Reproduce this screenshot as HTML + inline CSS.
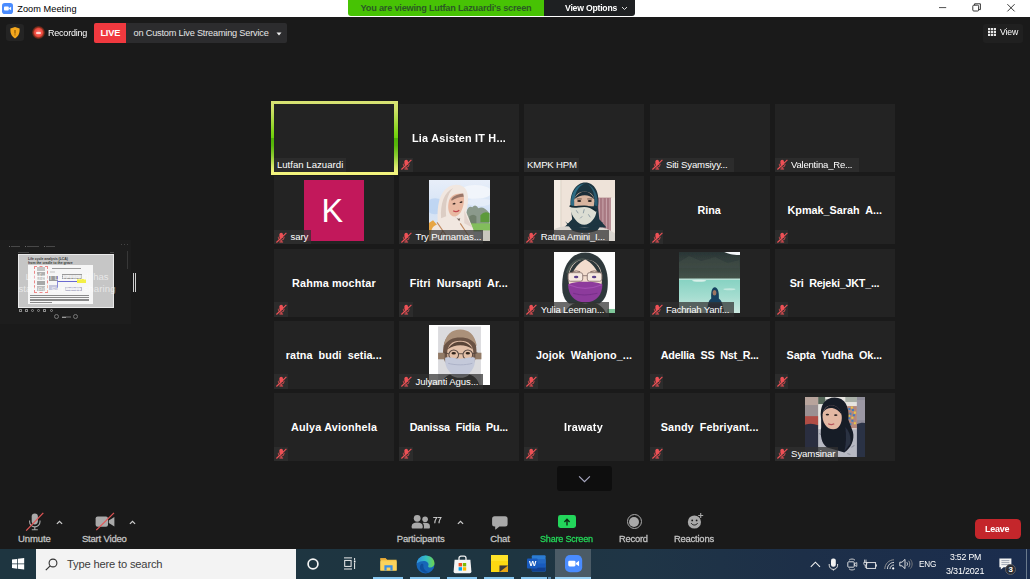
<!DOCTYPE html>
<html lang="en"><head><meta charset="utf-8"><title>Zoom Meeting</title>
<style>
html,body{margin:0;padding:0}
body{width:1030px;height:579px;overflow:hidden;position:relative;background:#1a1a1a;font-family:"Liberation Sans",sans-serif;color:#fff}
div,svg,span{position:absolute}
.t{white-space:pre;line-height:14px;height:14px}
.tile{width:120.2px;height:67.8px;background:#232323}
.av{left:29.85px;top:3.65px;width:60.5px;height:60.5px}
.lab{height:14.4px;background:rgba(48,48,48,.72)}
.mic{position:static;display:block}
svg{overflow:visible}
</style></head><body>
<div id="titlebar" style="left:0;top:0;width:1030px;height:17px;background:#fff"></div>
<svg style="left:2px;top:2.6px" width="11" height="11" viewBox="0 0 11 11"><rect width="11" height="11" rx="2.8" fill="#4a8cff"/><rect x="2" y="3.6" width="4.8" height="3.8" rx="0.9" fill="#fff"/><path d="M7.1 5l2-1.3v3.6l-2-1.3z" fill="#fff"/></svg>
<span class="t" style="left:17.3px;top:1.6px;font-size:9.2px;color:#000;letter-spacing:0.047px;">Zoom Meeting</span><svg style="left:930px;top:0" width="100" height="17" viewBox="0 0 100 17"><path d="M9 7.6h7.2" stroke="#222" stroke-width="0.8"/><rect x="42.8" y="5.2" width="5.8" height="5.8" rx="1" fill="none" stroke="#222" stroke-width="0.9"/><path d="M44.6 5.2v-1.4h5.8v5.8h-1.6" fill="none" stroke="#222" stroke-width="0.9"/><path d="M77.4 4.2l7.2 7.2M84.6 4.2l-7.2 7.2" stroke="#222" stroke-width="0.9"/></svg>
<div style="left:348.3px;top:0;width:196px;height:16.2px;background:#47c304;border-radius:0 0 0 3px"></div>
<div style="left:544px;top:0;width:91px;height:15.8px;background:#1e2022;border-radius:0 0 3px 0"></div>
<span class="t" style="left:360.6px;top:1px;font-size:9.2px;font-weight:700;color:#2b5a24;letter-spacing:-0.220px;">You are viewing Lutfan Lazuardi's screen</span><span class="t" style="left:565.4px;top:1px;font-size:9.2px;font-weight:700;color:#fff;letter-spacing:-0.220px;transform-origin:0 50%;transform:scaleX(0.9406);">View Options</span><svg style="left:621px;top:6px" width="7" height="5" viewBox="0 0 7 5"><path d="M1 1l2.5 2.5L6 1" fill="none" stroke="#ddd" stroke-width="1"/></svg>
<div style="left:6px;top:23.5px;width:17.5px;height:17.5px;background:#242424;border-radius:3px"></div>
<svg style="left:9.5px;top:26.6px" width="10" height="11.6" viewBox="0 0 10 11.6"><path d="M5 0l4.6 1.6c.3 4.6-.9 7.6-4.6 10C1.300 9.200.1 6.200.4 1.600z" fill="#f4a71d"/><rect x="4.500" y="3" width="1" height="3.600" fill="#7a4b00"/><rect x="4.500" y="7.400" width="1" height="1" fill="#7a4b00"/></svg>
<div style="left:32.4px;top:26.2px;width:13px;height:13px;border-radius:50%;background:radial-gradient(circle,#ff9088 0,#f5554d 30%,#e9493c 44%,rgba(210,62,28,.55) 58%,rgba(150,45,10,.22) 76%,rgba(120,40,10,0) 100%)"></div>
<div style="left:36.4px;top:31.8px;width:5px;height:1.8px;background:#ffd9d2;border-radius:1px"></div>
<span class="t" style="left:48.3px;top:25.6px;font-size:9.2px;color:#fff;letter-spacing:-0.220px;transform-origin:0 50%;transform:scaleX(0.9797);">Recording</span><div style="left:94px;top:23.2px;width:193px;height:20px;background:#2c2c2e;border-radius:2px"></div>
<div style="left:94px;top:23.2px;width:32px;height:20px;background:#f0393f;border-radius:2px 0 0 2px"></div>
<span class="t" style="left:100.4px;top:26px;font-size:9.2px;font-weight:700;color:#fff;letter-spacing:-0.155px;">LIVE</span><span class="t" style="left:133.6px;top:26px;font-size:9.2px;color:#e6e6e6;letter-spacing:-0.202px;">on Custom Live Streaming Service</span><svg style="left:276px;top:31.5px" width="6" height="4" viewBox="0 0 6 4"><path d="M0.5 0.5h5L3 3.5z" fill="#eee"/></svg>
<div style="left:983.4px;top:24px;width:40px;height:19px;background:#202020;border-radius:3px"></div>
<svg style="left:987.6px;top:28.4px" width="8" height="8" viewBox="0 0 8 8"><rect x="0" y="0" width="2.2" height="2.2" fill="#e8e8e8"/><rect x="0" y="2.9" width="2.2" height="2.2" fill="#e8e8e8"/><rect x="0" y="5.8" width="2.2" height="2.2" fill="#e8e8e8"/><rect x="2.9" y="0" width="2.2" height="2.2" fill="#e8e8e8"/><rect x="2.9" y="2.9" width="2.2" height="2.2" fill="#e8e8e8"/><rect x="2.9" y="5.8" width="2.2" height="2.2" fill="#e8e8e8"/><rect x="5.8" y="0" width="2.2" height="2.2" fill="#e8e8e8"/><rect x="5.8" y="2.9" width="2.2" height="2.2" fill="#e8e8e8"/><rect x="5.8" y="5.8" width="2.2" height="2.2" fill="#e8e8e8"/></svg>
<span class="t" style="left:1000px;top:25.4px;font-size:9.2px;color:#fff;letter-spacing:-0.220px;transform-origin:0 50%;transform:scaleX(0.9539);">View</span><div style="left:0;top:240px;width:131px;height:84px;background:#1d1d1d"></div>
<div style="left:18.3px;top:253.8px;width:95.8px;height:54px;background:#e9e9e9"></div>
<div style="left:19.3px;top:254.8px;width:93.8px;height:52px;background:#c6c6c6"></div>
<div style="left:27.9px;top:264.5px;width:65.3px;height:39.1px;background:#f6f6f6"></div>
<div class="t" style="left:27.9px;top:258.2px;font-size:3.5px;line-height:3.8px;height:auto;color:#3a3a3a;font-weight:700;white-space:pre;letter-spacing:-0.05px">Life cycle analysis (LCA)
from the cradle to the grave</div>
<div style="left:52px;top:267.7px;width:29px;height:0.6px;background:#9a9a9a"></div>
<div style="left:34.1px;top:266.2px;width:13.8px;height:26.6px;border:0.45px dashed #e88;box-sizing:border-box"></div>
<div style="left:36.6px;top:267.4px;width:8.8px;height:3.4px;background:#c4c4c4"></div><div style="left:36.6px;top:272px;width:8.8px;height:3.6px;background:#b0b0b0"></div><div style="left:36.6px;top:276.8px;width:8.8px;height:3.2px;background:#c8c8c8"></div><div style="left:36.6px;top:281.2px;width:8.8px;height:3.6px;background:#a8a8a8"></div><div style="left:36.6px;top:286px;width:8.8px;height:4.6px;background:#bcbcbc"></div>
<div style="left:49px;top:276px;width:7.6px;height:4.6px;background:#9a9a9a"></div><div style="left:49px;top:285px;width:8.6px;height:4.6px;background:#c6c6dc"></div><div style="left:49.6px;top:271px;width:5px;height:2.4px;background:#dcdcdc"></div>
<div style="left:61.5px;top:273.6px;width:20.5px;height:5.4px;border:0.6px solid #9a9a9a;box-sizing:border-box;background:#e6e6e6"></div><div style="left:64.8px;top:286.7px;width:17.2px;height:4.1px;border:0.5px solid #b8b8cc;box-sizing:border-box;background:#ececf2"></div>
<div style="left:57px;top:281px;width:20.1px;height:0.8px;background:#6a6ad0"></div><div style="left:57.4px;top:276px;width:0.7px;height:12px;background:#8a8ad8"></div>
<div style="left:77.1px;top:279px;width:8.6px;height:3.9px;background:#f3ef45"></div>
<div style="left:30.4px;top:295.1px;width:59px;height:0.7px;background:#8a8a8a"></div><div style="left:30.4px;top:296.8px;width:59px;height:0.7px;background:#8a8a8a"></div><div style="left:30.4px;top:298.5px;width:59px;height:0.7px;background:#8a8a8a"></div><div style="left:30.4px;top:300.2px;width:59px;height:0.7px;background:#8a8a8a"></div><div style="left:30.4px;top:301.9px;width:22px;height:0.7px;background:#8a8a8a"></div>
<span class="t" style="left:25.4px;top:269.9px;font-size:9.6px;color:rgba(255,255,255,.6);letter-spacing:-0.057px;">Lutfan Lazuardi has</span><span class="t" style="left:18.4px;top:282.2px;font-size:9.6px;color:rgba(255,255,255,.6);letter-spacing:0.108px;">started screen sharing</span><div style="left:132.7px;top:273px;width:1px;height:19.4px;background:#cfcfcf"></div><div style="left:134.9px;top:273px;width:1px;height:19.4px;background:#cfcfcf"></div>
<div style="left:9px;top:245.7px;width:1.2px;height:1.2px;background:#666"></div><div style="left:11.4px;top:245.9px;width:9.1px;height:0.9px;background:#484848"></div><div style="left:25px;top:245.7px;width:1.2px;height:1.2px;background:#666"></div><div style="left:27.4px;top:245.9px;width:11.5px;height:0.9px;background:#484848"></div><div style="left:43.5px;top:245.7px;width:1.2px;height:1.2px;background:#666"></div><div style="left:45.9px;top:245.9px;width:9.4px;height:0.9px;background:#484848"></div>
<div style="left:18.4px;top:251.5px;width:11px;height:0.8px;background:#444"></div><div style="left:109.6px;top:251.5px;width:4px;height:0.8px;background:#444"></div><div style="left:126.9px;top:251.4px;width:0.8px;height:18px;background:#383838"></div><div style="left:120.6px;top:244px;width:1.4px;height:1px;background:#444"></div><div style="left:123.8px;top:244px;width:1.4px;height:1px;background:#444"></div><div style="left:127px;top:244px;width:1.4px;height:1px;background:#444"></div>
<div style="left:19px;top:309px;width:3px;height:3px;border-radius:0.5px;border:0.7px solid #8c8c8c;box-sizing:border-box"></div><div style="left:24.8px;top:309px;width:3px;height:3px;border-radius:0.5px;border:0.7px solid #8c8c8c;box-sizing:border-box"></div><div style="left:31px;top:309px;width:3px;height:3px;border-radius:50%;border:0.7px solid #8c8c8c;box-sizing:border-box"></div><div style="left:37.2px;top:309px;width:3px;height:3px;border-radius:50%;border:0.7px solid #8c8c8c;box-sizing:border-box"></div><div style="left:43.3px;top:309px;width:3px;height:3px;border-radius:0.5px;border:0.7px solid #8c8c8c;box-sizing:border-box"></div><div style="left:49.7px;top:309px;width:3px;height:3px;border-radius:50%;border:0.7px solid #8c8c8c;box-sizing:border-box"></div>
<div style="left:54.1px;top:314.2px;width:5px;height:5px;border-radius:50%;border:0.6px solid #777;box-sizing:border-box"></div><div style="left:73px;top:314.2px;width:5px;height:5px;border-radius:50%;border:0.6px solid #777;box-sizing:border-box"></div><div style="left:61.5px;top:316px;width:9.9px;height:1.6px;background:#4a4a4a"></div><div style="left:61.5px;top:317.2px;width:4px;height:1px;background:#999"></div>
<div style="left:271px;top:101px;width:126.5px;height:74.2px;background:linear-gradient(#d8e274 0,#cde066 12%,#a6da3c 28%,#7fd416 42%,#6ccf0c 50%,#4fb106 50%,#58b60a 60%,#8ccd30 74%,#d6e868 88%,#f3f47d 96%,#f4f47e 100%)"></div>
<div class="tile" style="left:274.1px;top:104.2px"></div>
<div class="lab" style="left:274.1px;top:157.6px;width:71.7px"></div><span class="t" style="left:276.9px;top:158.1px;font-size:9.6px;color:#fff;letter-spacing:0.017px;">Lutfan Lazuardi</span>
<div class="tile" style="left:399.2px;top:104.2px"></div>
<span class="t" style="left:412.2px;top:131.1px;font-size:10.8px;font-weight:700;color:#fff;letter-spacing:0.220px;transform-origin:0 50%;transform:scaleX(1.0035);">Lia Asisten IT H...</span><div class="lab" style="left:399.2px;top:157.6px;width:13.8px"></div><div style="position:absolute;left:401.2px;top:159.3px"><svg class="mic" viewBox="0 0 11 11" width="11" height="11"><rect x="3.4" y="0.7" width="3.6" height="5.8" rx="1.8" fill="#ee5156"/><path d="M2.300 4.800v.5a2.900 2.900 0 0 0 5.800 0v-.5" fill="none" stroke="#ee5156" stroke-width="0.8"/><path d="M5.200 8.200v1.500" stroke="#ee5156" stroke-width="1.100"/><path d="M3.400 10h3.700" stroke="#ee5156" stroke-width="1"/><path d="M0.400 10.500L10.400 0.800" stroke="#ee5156" stroke-width="1.150"/></svg></div>
<div class="tile" style="left:524.3px;top:104.2px"></div>
<div class="lab" style="left:524.3px;top:157.6px;width:55.1px"></div><span class="t" style="left:527.1px;top:158.1px;font-size:9.6px;color:#fff;letter-spacing:-0.173px;">KMPK HPM</span>
<div class="tile" style="left:649.5px;top:104.2px"></div>
<div class="lab" style="left:649.5px;top:157.6px;width:84.3px"></div><span class="t" style="left:665.9px;top:158.1px;font-size:9.6px;color:#fff;letter-spacing:-0.164px;">Siti Syamsiyy...</span><div style="position:absolute;left:651.5px;top:159.3px"><svg class="mic" viewBox="0 0 11 11" width="11" height="11"><rect x="3.4" y="0.7" width="3.6" height="5.8" rx="1.8" fill="#ee5156"/><path d="M2.300 4.800v.5a2.900 2.900 0 0 0 5.800 0v-.5" fill="none" stroke="#ee5156" stroke-width="0.8"/><path d="M5.200 8.200v1.500" stroke="#ee5156" stroke-width="1.100"/><path d="M3.400 10h3.700" stroke="#ee5156" stroke-width="1"/><path d="M0.400 10.500L10.400 0.800" stroke="#ee5156" stroke-width="1.150"/></svg></div>
<div class="tile" style="left:774.7px;top:104.2px"></div>
<div class="lab" style="left:774.7px;top:157.6px;width:84.3px"></div><span class="t" style="left:791.1px;top:158.1px;font-size:9.6px;color:#fff;letter-spacing:-0.220px;transform-origin:0 50%;transform:scaleX(0.9953);">Valentina_Re...</span><div style="position:absolute;left:776.7px;top:159.3px"><svg class="mic" viewBox="0 0 11 11" width="11" height="11"><rect x="3.4" y="0.7" width="3.6" height="5.8" rx="1.8" fill="#ee5156"/><path d="M2.300 4.800v.5a2.900 2.900 0 0 0 5.800 0v-.5" fill="none" stroke="#ee5156" stroke-width="0.8"/><path d="M5.200 8.200v1.500" stroke="#ee5156" stroke-width="1.100"/><path d="M3.400 10h3.700" stroke="#ee5156" stroke-width="1"/><path d="M0.400 10.500L10.400 0.800" stroke="#ee5156" stroke-width="1.150"/></svg></div>
<div class="tile" style="left:274.1px;top:176.4px"><div class="av" style="background:#c2185b"></div></div>
<div class="lab" style="left:274.1px;top:229.8px;width:36.6px"></div><span class="t" style="left:290.5px;top:230.3px;font-size:9.6px;color:#fff;letter-spacing:-0.106px;">sary</span><div style="position:absolute;left:276.1px;top:231.5px"><svg class="mic" viewBox="0 0 11 11" width="11" height="11"><rect x="3.4" y="0.7" width="3.6" height="5.8" rx="1.8" fill="#ee5156"/><path d="M2.300 4.800v.5a2.900 2.900 0 0 0 5.800 0v-.5" fill="none" stroke="#ee5156" stroke-width="0.8"/><path d="M5.200 8.200v1.500" stroke="#ee5156" stroke-width="1.100"/><path d="M3.400 10h3.700" stroke="#ee5156" stroke-width="1"/><path d="M0.400 10.500L10.400 0.800" stroke="#ee5156" stroke-width="1.150"/></svg></div>
<span class="t" style="left:321.5px;top:190.9px;font-size:32.4px;color:#fff;letter-spacing:-0.009px;line-height:40px;height:40px;">K</span><div class="tile" style="left:399.2px;top:176.4px"><svg class="av" viewBox="0 0 60 60" width="60.5" height="60.5" style="overflow:hidden"><defs><filter id="bla" x="-5%" y="-5%" width="110%" height="110%"><feGaussianBlur stdDeviation="0.45"/></filter></defs><g filter="url(#bla)"><defs><linearGradient id="sky1" x1="0" y1="0" x2="0" y2="1"><stop offset="0" stop-color="#e9eff9"/><stop offset="0.5" stop-color="#d3e2f6"/><stop offset="1" stop-color="#e2e8ee"/></linearGradient></defs>
<rect x="-2" y="-2" width="64" height="64" fill="url(#sky1)"/>
<ellipse cx="6" cy="26" rx="9" ry="8" fill="#b9d2f1" opacity=".8"/>
<ellipse cx="46" cy="12" rx="16" ry="7" fill="#f3f6fb" opacity=".9"/>
<ellipse cx="50" cy="22" rx="12" ry="4" fill="#e6edf8" opacity=".9"/>
<path d="M37 32q2-7 6-5q3-4 6 1q5-3 11 5v12H37z" fill="#8b9a8c"/>
<path d="M40 36q4-3 7 0v8h-7z" fill="#6f806c"/>
<path d="M51 35q4-5 9-2v9h-9z" fill="#5c9a3a"/>
<rect x="41" y="43" width="21" height="8" fill="#82bd5c"/><rect x="52" y="50" width="10" height="12" fill="#c9c6bd"/>
<path d="M-2 44l6-4 8 9v13H-2z" fill="#e7a644"/>
<path d="M9 44C7 22 12 7 25 5c11-1.500 15 7 13.500 18l-1.500 9 7 17 1 13H1l1-10c1-5 3-7 7-8z" fill="#f1e7e0"/>
<path d="M12 38c-1-14 3-26 12-30-6 6-8 16-7 28z" fill="#dccdc4"/>
<path d="M35 30l3 8 5 9-8-4z" fill="#e3d3cc"/>
<path d="M19.500 22c1-6 7-9.500 14-8.500 2.500 5 1 13.500-2 18.500-3 4-7 5.500-9.500 3-3-3-3.500-8-2.500-13z" fill="#e9b9a2"/>
<path d="M22 19c3-4 8-5 12-5.500l.5 3c-4 0-8 1-12 4z" fill="#5a4038" opacity=".55"/>
<ellipse cx="24.800" cy="23.500" rx="1.500" ry=".8" fill="#3a2a26" transform="rotate(-12 24.800 23.500)"/>
<ellipse cx="31.800" cy="22" rx="1.500" ry=".8" fill="#3a2a26" transform="rotate(-12 31.800 22)"/>
<path d="M24 30.500q3 2 6-.5" stroke="#c2474f" stroke-width="1.300" fill="none"/>
<path d="M8 42l11 16M31 43l8 12M14 50l-6 10" stroke="#c08a62" stroke-width="1.100" fill="none"/>
<path d="M26 36c1 2 3 3 5 2l-1 3z" fill="#6b5a52"/></g></svg></div>
<div class="lab" style="left:399.2px;top:229.8px;width:84.3px"></div><span class="t" style="left:415.6px;top:230.3px;font-size:9.6px;color:#fff;letter-spacing:-0.153px;">Try Purnamas...</span><div style="position:absolute;left:401.2px;top:231.5px"><svg class="mic" viewBox="0 0 11 11" width="11" height="11"><rect x="3.4" y="0.7" width="3.6" height="5.8" rx="1.8" fill="#ee5156"/><path d="M2.300 4.800v.5a2.900 2.900 0 0 0 5.800 0v-.5" fill="none" stroke="#ee5156" stroke-width="0.8"/><path d="M5.200 8.200v1.500" stroke="#ee5156" stroke-width="1.100"/><path d="M3.400 10h3.700" stroke="#ee5156" stroke-width="1"/><path d="M0.400 10.500L10.400 0.800" stroke="#ee5156" stroke-width="1.150"/></svg></div>
<div class="tile" style="left:524.3px;top:176.4px"><svg class="av" viewBox="0 0 60 60" width="60.5" height="60.5" style="overflow:hidden"><defs><filter id="blb" x="-5%" y="-5%" width="110%" height="110%"><feGaussianBlur stdDeviation="0.45"/></filter></defs><g filter="url(#blb)"><rect x="-2" y="-2" width="64" height="64" fill="#eee3d9"/>
<rect x="-2" y="-2" width="9" height="64" fill="#f4ede5"/><rect x="6.500" y="0" width=".8" height="60" fill="#d5cdbf"/>
<rect x="42.500" y="17.500" width="14.500" height="34" fill="#a87982"/><path d="M45 18v33M48.500 18v33M52 18v33M55.500 18v33" stroke="#c7a2a8" stroke-width="1.100"/>
<rect x="56.500" y="17.500" width="6" height="34" fill="#efe9e2"/>
<path d="M17 30C14 13 22 2.500 31 2.500S46 12 43.500 27l1.500 12 7 8H10l8-8z" fill="#1b3440"/>
<path d="M17.500 28C15 14 22 4 31 3.500c-7 2-12 11-10.500 23z" fill="#2d6c84"/>
<path d="M43 26c1.500-10-3-19-10-22 6 4 8 12 7 21z" fill="#2a5d73"/>
<path d="M20 20c1-5.500 5-8.500 10.500-8.500S40 15 40 21l-.5 5H20z" fill="#d8b59f"/>
<path d="M20 19c3-5 7-7.500 10.500-7.500S38 14 40 19c-3-3-6-4-9.500-4s-7 1.500-10.500 4z" fill="#1e2f38"/>
<ellipse cx="25" cy="20.800" rx="2" ry=".9" fill="#2a2220"/><ellipse cx="35.500" cy="20.800" rx="2" ry=".9" fill="#2a2220"/>
<path d="M22.500 18.800h5M33 18.800h5" stroke="#3a2c28" stroke-width=".7"/>
<path d="M15.500 25.500c4 2.500 8 .5 14.500.5s9.500 3 12 5c0 6-6 13.500-12 13.500S16.500 36 15.500 25.500z" fill="#dcded3"/>
<path d="M22 30l2 3M30 29l-1 4M34 34l2 3M26 38l2-2" stroke="#7f8f9a" stroke-width=".8"/>
<path d="M15.500 25.500c4 2.500 8 .5 14.500.5s9.500 3 12 5" stroke="#172a32" stroke-width="1.600" fill="none"/>
<path d="M-2 50c8-5 16-5 23-3l9 3 10-3c9-1 15 2 22 7v8H-2z" fill="#d9d5cf"/>
<path d="M11 41c6 7 28 9 38 .5l-6 8.500c-8 3-18 3-25 0z" fill="#1b3440"/></g></svg></div>
<div class="lab" style="left:524.3px;top:229.8px;width:84.3px"></div><span class="t" style="left:540.7px;top:230.3px;font-size:9.6px;color:#fff;letter-spacing:-0.220px;">Ratna Amini_I...</span><div style="position:absolute;left:526.3px;top:231.5px"><svg class="mic" viewBox="0 0 11 11" width="11" height="11"><rect x="3.4" y="0.7" width="3.6" height="5.8" rx="1.8" fill="#ee5156"/><path d="M2.300 4.800v.5a2.900 2.900 0 0 0 5.800 0v-.5" fill="none" stroke="#ee5156" stroke-width="0.8"/><path d="M5.200 8.200v1.500" stroke="#ee5156" stroke-width="1.100"/><path d="M3.400 10h3.700" stroke="#ee5156" stroke-width="1"/><path d="M0.400 10.500L10.400 0.800" stroke="#ee5156" stroke-width="1.150"/></svg></div>
<div class="tile" style="left:649.5px;top:176.4px"></div>
<span class="t" style="left:697.4px;top:203.3px;font-size:10.8px;font-weight:700;color:#fff;letter-spacing:-0.027px;">Rina</span><div class="lab" style="left:649.5px;top:229.8px;width:13.8px"></div><div style="position:absolute;left:651.5px;top:231.5px"><svg class="mic" viewBox="0 0 11 11" width="11" height="11"><rect x="3.4" y="0.7" width="3.6" height="5.8" rx="1.8" fill="#ee5156"/><path d="M2.300 4.800v.5a2.900 2.900 0 0 0 5.800 0v-.5" fill="none" stroke="#ee5156" stroke-width="0.8"/><path d="M5.200 8.200v1.500" stroke="#ee5156" stroke-width="1.100"/><path d="M3.400 10h3.700" stroke="#ee5156" stroke-width="1"/><path d="M0.400 10.500L10.400 0.800" stroke="#ee5156" stroke-width="1.150"/></svg></div>
<div class="tile" style="left:774.7px;top:176.4px"></div>
<span class="t" style="left:787.5px;top:203.3px;font-size:10.8px;font-weight:700;color:#fff;letter-spacing:0.005px;word-spacing:3.00px;">Kpmak_Sarah A...</span><div class="lab" style="left:774.7px;top:229.8px;width:13.8px"></div><div style="position:absolute;left:776.7px;top:231.5px"><svg class="mic" viewBox="0 0 11 11" width="11" height="11"><rect x="3.4" y="0.7" width="3.6" height="5.8" rx="1.8" fill="#ee5156"/><path d="M2.300 4.800v.5a2.900 2.900 0 0 0 5.800 0v-.5" fill="none" stroke="#ee5156" stroke-width="0.8"/><path d="M5.200 8.200v1.500" stroke="#ee5156" stroke-width="1.100"/><path d="M3.400 10h3.700" stroke="#ee5156" stroke-width="1"/><path d="M0.400 10.500L10.400 0.800" stroke="#ee5156" stroke-width="1.150"/></svg></div>
<div class="tile" style="left:274.1px;top:248.8px"></div>
<span class="t" style="left:292px;top:275.7px;font-size:10.8px;font-weight:700;color:#fff;letter-spacing:0.176px;">Rahma mochtar</span><div class="lab" style="left:274.1px;top:302.2px;width:13.8px"></div><div style="position:absolute;left:276.1px;top:303.9px"><svg class="mic" viewBox="0 0 11 11" width="11" height="11"><rect x="3.4" y="0.7" width="3.6" height="5.8" rx="1.8" fill="#ee5156"/><path d="M2.300 4.800v.5a2.900 2.900 0 0 0 5.800 0v-.5" fill="none" stroke="#ee5156" stroke-width="0.8"/><path d="M5.200 8.200v1.500" stroke="#ee5156" stroke-width="1.100"/><path d="M3.400 10h3.700" stroke="#ee5156" stroke-width="1"/><path d="M0.400 10.500L10.400 0.800" stroke="#ee5156" stroke-width="1.150"/></svg></div>
<div class="tile" style="left:399.2px;top:248.8px"></div>
<span class="t" style="left:409.7px;top:275.7px;font-size:10.8px;font-weight:700;color:#fff;letter-spacing:0.101px;word-spacing:3.00px;">Fitri Nursapti Ar...</span><div class="lab" style="left:399.2px;top:302.2px;width:13.8px"></div><div style="position:absolute;left:401.2px;top:303.9px"><svg class="mic" viewBox="0 0 11 11" width="11" height="11"><rect x="3.4" y="0.7" width="3.6" height="5.8" rx="1.8" fill="#ee5156"/><path d="M2.300 4.800v.5a2.900 2.900 0 0 0 5.800 0v-.5" fill="none" stroke="#ee5156" stroke-width="0.8"/><path d="M5.200 8.200v1.500" stroke="#ee5156" stroke-width="1.100"/><path d="M3.400 10h3.700" stroke="#ee5156" stroke-width="1"/><path d="M0.400 10.500L10.400 0.800" stroke="#ee5156" stroke-width="1.150"/></svg></div>
<div class="tile" style="left:524.3px;top:248.8px"><svg class="av" viewBox="0 0 60 60" width="60.5" height="60.5" style="overflow:hidden"><defs><filter id="blc" x="-5%" y="-5%" width="110%" height="110%"><feGaussianBlur stdDeviation="0.45"/></filter></defs><g filter="url(#blc)"><rect x="-2" y="-2" width="64" height="64" fill="#fdfdfd"/>
<path d="M8.500 40C6 16 16 .5 31 .5S55.500 15 53 37c-1 8-4.500 12-8 14H15c-3.500-2-5.500-6-6.500-11z" fill="#2e383a"/>
<path d="M12 20c3-9 9-14 19-14-8 3-13 9-15 18z" fill="#46524f"/>
<path d="M14.500 29c-1-13 5-21.500 16.500-21.500S48.500 16 47.500 29c-.5 9-5 17-16.500 17S15 38 14.500 29z" fill="#f3dccd"/>
<path d="M14 27c1-8 4-14 9-17.500 3-1.500 6-2 8-2-6 3-12 9-15 20z" fill="#2e383a"/>
<path d="M48 27c-1-8-4-14-9-17.500-3-1.500-6-2-8-2 6 3 12 9 15 20z" fill="#2e383a"/>
<rect x="14" y="20.500" width="14.500" height="8.500" rx="2.200" fill="#f6e8df" stroke="#8b7672" stroke-width=".9"/><rect x="33" y="20.500" width="14.500" height="8.500" rx="2.200" fill="#f6e8df" stroke="#8b7672" stroke-width=".9"/>
<path d="M28.500 23.500h4.500" stroke="#8b7672" stroke-width=".9"/>
<ellipse cx="22" cy="24.800" rx="2.200" ry="1.300" fill="#5b3f8a"/><ellipse cx="39.800" cy="24.800" rx="2.200" ry="1.300" fill="#5b3f8a"/>
<path d="M18 19.500q4-1.500 8 0M36 19.500q4-1.500 8 0" stroke="#6a5550" stroke-width=".8" fill="none"/>
<path d="M14 32c5-2 10-2.500 17-2.500S43 30 48 32c0 10-5.500 18-17 18S14 42 14 32z" fill="#8d3a9c"/>
<path d="M14.500 32.500c6 2.500 11 3.500 16.500 3.500s10.500-1 16.500-3.500" stroke="#a350b2" stroke-width="1.200" fill="none"/>
<path d="M19 41c6 2 16 2 24 0" stroke="#78308a" stroke-width="1" fill="none"/>
<path d="M10 62c2-7 8-11 14-12.500l7 2 7-2c6 1.500 12 5.500 14 12.500z" fill="#3b4239"/>
<rect x="53" y="56.500" width="9" height="5.500" fill="#7fc79a"/></g></svg></div>
<div class="lab" style="left:524.3px;top:302.2px;width:84.3px"></div><span class="t" style="left:540.7px;top:302.7px;font-size:9.6px;color:#fff;letter-spacing:-0.176px;">Yulia Leeman...</span><div style="position:absolute;left:526.3px;top:303.9px"><svg class="mic" viewBox="0 0 11 11" width="11" height="11"><rect x="3.4" y="0.7" width="3.6" height="5.8" rx="1.8" fill="#ee5156"/><path d="M2.300 4.800v.5a2.900 2.900 0 0 0 5.800 0v-.5" fill="none" stroke="#ee5156" stroke-width="0.8"/><path d="M5.200 8.200v1.500" stroke="#ee5156" stroke-width="1.100"/><path d="M3.400 10h3.700" stroke="#ee5156" stroke-width="1"/><path d="M0.400 10.500L10.400 0.800" stroke="#ee5156" stroke-width="1.150"/></svg></div>
<div class="tile" style="left:649.5px;top:248.8px"><svg class="av" viewBox="0 0 60 60" width="60.5" height="60.5" style="overflow:hidden"><defs><filter id="bld" x="-5%" y="-5%" width="110%" height="110%"><feGaussianBlur stdDeviation="0.4"/></filter></defs><g filter="url(#bld)"><defs><linearGradient id="mt" x1="0" y1="0" x2="0" y2="1"><stop offset="0" stop-color="#283334"/><stop offset="0.5" stop-color="#36433f"/><stop offset="1" stop-color="#455349"/></linearGradient><linearGradient id="lk" x1="0" y1="0" x2="0" y2="1"><stop offset="0" stop-color="#86d2c2"/><stop offset="0.5" stop-color="#a5ddd0"/><stop offset="1" stop-color="#cfe9e1"/></linearGradient></defs>
<rect x="-2" y="-2" width="64" height="29" fill="url(#mt)"/>
<path d="M0 10l10-6 12 5 14-4 12 6 12-3v8H0z" fill="#445049" opacity=".45"/>
<path d="M40-2h22v5c-7 .5-13-1-22-5z" fill="#f4f7f9"/>
<rect x="-2" y="27" width="64" height="35" fill="url(#lk)"/><rect x="-2" y="26.300" width="64" height="1.400" fill="#bfe6dc"/>
<ellipse cx="20" cy="28.500" rx="7" ry=".9" fill="#d9efe9"/><ellipse cx="50" cy="37" rx="6" ry="1" fill="#c5e8df"/>
<path d="M28 62c0-9 1-14 4-16-.5-6 .5-11 3.500-11s4.500 5 4 11c3 2 4.500 7 5.500 16z" fill="#16405e"/>
<ellipse cx="35.200" cy="40.500" rx="1.900" ry="2.700" fill="#9b7562"/>
<path d="M27.500 62c0-6 1-9 3.500-11h9.500c2.500 2 3.500 5 4.500 11z" fill="#1d2c44"/></g></svg></div>
<div class="lab" style="left:649.5px;top:302.2px;width:84.3px"></div><span class="t" style="left:665.9px;top:302.7px;font-size:9.6px;color:#fff;letter-spacing:-0.220px;">Fachriah Yanf...</span><div style="position:absolute;left:651.5px;top:303.9px"><svg class="mic" viewBox="0 0 11 11" width="11" height="11"><rect x="3.4" y="0.7" width="3.6" height="5.8" rx="1.8" fill="#ee5156"/><path d="M2.300 4.800v.5a2.900 2.900 0 0 0 5.800 0v-.5" fill="none" stroke="#ee5156" stroke-width="0.8"/><path d="M5.200 8.200v1.500" stroke="#ee5156" stroke-width="1.100"/><path d="M3.400 10h3.700" stroke="#ee5156" stroke-width="1"/><path d="M0.400 10.500L10.400 0.800" stroke="#ee5156" stroke-width="1.150"/></svg></div>
<div class="tile" style="left:774.7px;top:248.8px"></div>
<span class="t" style="left:789.7px;top:275.7px;font-size:10.8px;font-weight:700;color:#fff;letter-spacing:-0.220px;word-spacing:3.00px;">Sri Rejeki_JKT_...</span><div class="lab" style="left:774.7px;top:302.2px;width:13.8px"></div><div style="position:absolute;left:776.7px;top:303.9px"><svg class="mic" viewBox="0 0 11 11" width="11" height="11"><rect x="3.4" y="0.7" width="3.6" height="5.8" rx="1.8" fill="#ee5156"/><path d="M2.300 4.800v.5a2.900 2.900 0 0 0 5.800 0v-.5" fill="none" stroke="#ee5156" stroke-width="0.8"/><path d="M5.200 8.200v1.500" stroke="#ee5156" stroke-width="1.100"/><path d="M3.400 10h3.700" stroke="#ee5156" stroke-width="1"/><path d="M0.400 10.500L10.400 0.800" stroke="#ee5156" stroke-width="1.150"/></svg></div>
<div class="tile" style="left:274.1px;top:321px"></div>
<span class="t" style="left:285.8px;top:347.9px;font-size:10.8px;font-weight:700;color:#fff;letter-spacing:0.063px;word-spacing:3.00px;">ratna budi setia...</span><div class="lab" style="left:274.1px;top:374.4px;width:13.8px"></div><div style="position:absolute;left:276.1px;top:376.1px"><svg class="mic" viewBox="0 0 11 11" width="11" height="11"><rect x="3.4" y="0.7" width="3.6" height="5.8" rx="1.8" fill="#ee5156"/><path d="M2.300 4.800v.5a2.900 2.900 0 0 0 5.800 0v-.5" fill="none" stroke="#ee5156" stroke-width="0.8"/><path d="M5.200 8.200v1.500" stroke="#ee5156" stroke-width="1.100"/><path d="M3.400 10h3.700" stroke="#ee5156" stroke-width="1"/><path d="M0.400 10.500L10.400 0.800" stroke="#ee5156" stroke-width="1.150"/></svg></div>
<div class="tile" style="left:399.2px;top:321px"><svg class="av" viewBox="0 0 60 60" width="60.5" height="60.5" style="overflow:hidden"><defs><filter id="ble" x="-5%" y="-5%" width="110%" height="110%"><feGaussianBlur stdDeviation="0.45"/></filter></defs><g filter="url(#ble)"><rect x="-2" y="-2" width="64" height="64" fill="#ffffff"/><rect x="9" y="1.500" width="42.500" height="60" fill="#dbdbde"/>
<path d="M14 31C13 14 20 5.500 31 5.500S48 14 47 31l-2 6H16z" fill="#6b5244"/>
<path d="M14.500 21C16.500 9 23 4.500 31 4.500S45.500 9 47.500 21c-4-6-9-8.500-16.500-8.500S18.500 15 14.500 21z" fill="#ab917a"/>
<rect x="9" y="27.500" width="6.500" height="6.500" fill="#927a66"/><rect x="46" y="27.500" width="6" height="6.500" fill="#927a66"/>
<path d="M18 28c0-8 5-12.500 13-12.500S44 20 44 28c0 10-4 18-13 18S18 38 18 28z" fill="#e3c0a8"/>
<path d="M18.500 24c3-5 7-7.500 12.500-7.500S40.500 19 43.500 24c-4-3-8-4-12.500-4s-8.500 1-12.500 4z" fill="#5a4438"/>
<circle cx="24.500" cy="29.500" r="4.800" fill="none" stroke="#54453f" stroke-width="1"/><circle cx="38.500" cy="29.500" r="4.800" fill="none" stroke="#54453f" stroke-width="1"/>
<path d="M29.300 28.500h4.400M15 27.500l4.700 1M48 27.500l-4.700 1" stroke="#54453f" stroke-width=".9"/>
<ellipse cx="24.500" cy="28" rx="2.200" ry="1.200" fill="#33261f"/><ellipse cx="38.500" cy="28" rx="2.200" ry="1.200" fill="#33261f"/>
<path d="M16 32.500c5-1.500 10 1 15 1s10-2.500 14.500-1c1 10-5 18.500-14.500 18.500S15 42.500 16 32.500z" fill="#c4c9da"/>
<path d="M19 38c7 2 17 2 24 0" stroke="#aab0c6" stroke-width=".9" fill="none"/>
<path d="M11 62c1-7 5-11 10-13 5 4.500 15 4.500 19 0 6 2 9.500 6 10.500 13z" fill="#2b292a"/></g></svg></div>
<div class="lab" style="left:399.2px;top:374.4px;width:84.3px"></div><span class="t" style="left:415.6px;top:374.9px;font-size:9.6px;color:#fff;letter-spacing:-0.108px;">Julyanti Agus...</span><div style="position:absolute;left:401.2px;top:376.1px"><svg class="mic" viewBox="0 0 11 11" width="11" height="11"><rect x="3.4" y="0.7" width="3.6" height="5.8" rx="1.8" fill="#ee5156"/><path d="M2.300 4.800v.5a2.900 2.900 0 0 0 5.800 0v-.5" fill="none" stroke="#ee5156" stroke-width="0.8"/><path d="M5.200 8.200v1.500" stroke="#ee5156" stroke-width="1.100"/><path d="M3.400 10h3.700" stroke="#ee5156" stroke-width="1"/><path d="M0.400 10.500L10.400 0.800" stroke="#ee5156" stroke-width="1.150"/></svg></div>
<div class="tile" style="left:524.3px;top:321px"></div>
<span class="t" style="left:535.9px;top:347.9px;font-size:10.8px;font-weight:700;color:#fff;letter-spacing:0.112px;word-spacing:3.00px;">Jojok Wahjono_...</span><div class="lab" style="left:524.3px;top:374.4px;width:13.8px"></div><div style="position:absolute;left:526.3px;top:376.1px"><svg class="mic" viewBox="0 0 11 11" width="11" height="11"><rect x="3.4" y="0.7" width="3.6" height="5.8" rx="1.8" fill="#ee5156"/><path d="M2.300 4.800v.5a2.900 2.900 0 0 0 5.800 0v-.5" fill="none" stroke="#ee5156" stroke-width="0.8"/><path d="M5.200 8.200v1.500" stroke="#ee5156" stroke-width="1.100"/><path d="M3.400 10h3.700" stroke="#ee5156" stroke-width="1"/><path d="M0.400 10.500L10.400 0.800" stroke="#ee5156" stroke-width="1.150"/></svg></div>
<div class="tile" style="left:649.5px;top:321px"></div>
<span class="t" style="left:660.8px;top:347.9px;font-size:10.8px;font-weight:700;color:#fff;letter-spacing:-0.220px;word-spacing:3.00px;">Adellia SS Nst_R...</span><div class="lab" style="left:649.5px;top:374.4px;width:13.8px"></div><div style="position:absolute;left:651.5px;top:376.1px"><svg class="mic" viewBox="0 0 11 11" width="11" height="11"><rect x="3.4" y="0.7" width="3.6" height="5.8" rx="1.8" fill="#ee5156"/><path d="M2.300 4.800v.5a2.900 2.900 0 0 0 5.800 0v-.5" fill="none" stroke="#ee5156" stroke-width="0.8"/><path d="M5.200 8.200v1.500" stroke="#ee5156" stroke-width="1.100"/><path d="M3.400 10h3.700" stroke="#ee5156" stroke-width="1"/><path d="M0.400 10.500L10.400 0.800" stroke="#ee5156" stroke-width="1.150"/></svg></div>
<div class="tile" style="left:774.7px;top:321px"></div>
<span class="t" style="left:786.6px;top:347.9px;font-size:10.8px;font-weight:700;color:#fff;letter-spacing:-0.095px;word-spacing:3.00px;">Sapta Yudha Ok...</span><div class="lab" style="left:774.7px;top:374.4px;width:13.8px"></div><div style="position:absolute;left:776.7px;top:376.1px"><svg class="mic" viewBox="0 0 11 11" width="11" height="11"><rect x="3.4" y="0.7" width="3.6" height="5.8" rx="1.8" fill="#ee5156"/><path d="M2.300 4.800v.5a2.900 2.900 0 0 0 5.800 0v-.5" fill="none" stroke="#ee5156" stroke-width="0.8"/><path d="M5.200 8.200v1.500" stroke="#ee5156" stroke-width="1.100"/><path d="M3.400 10h3.700" stroke="#ee5156" stroke-width="1"/><path d="M0.400 10.500L10.400 0.800" stroke="#ee5156" stroke-width="1.150"/></svg></div>
<div class="tile" style="left:274.1px;top:393.2px"></div>
<span class="t" style="left:291px;top:420.1px;font-size:10.8px;font-weight:700;color:#fff;letter-spacing:0.193px;">Aulya Avionhela</span><div class="lab" style="left:274.1px;top:446.6px;width:13.8px"></div><div style="position:absolute;left:276.1px;top:448.3px"><svg class="mic" viewBox="0 0 11 11" width="11" height="11"><rect x="3.4" y="0.7" width="3.6" height="5.8" rx="1.8" fill="#ee5156"/><path d="M2.300 4.800v.5a2.900 2.900 0 0 0 5.800 0v-.5" fill="none" stroke="#ee5156" stroke-width="0.8"/><path d="M5.200 8.200v1.500" stroke="#ee5156" stroke-width="1.100"/><path d="M3.400 10h3.700" stroke="#ee5156" stroke-width="1"/><path d="M0.400 10.500L10.400 0.800" stroke="#ee5156" stroke-width="1.150"/></svg></div>
<div class="tile" style="left:399.2px;top:393.2px"></div>
<span class="t" style="left:409.7px;top:420.1px;font-size:10.8px;font-weight:700;color:#fff;letter-spacing:-0.169px;word-spacing:3.00px;">Danissa Fidia Pu...</span><div class="lab" style="left:399.2px;top:446.6px;width:13.8px"></div><div style="position:absolute;left:401.2px;top:448.3px"><svg class="mic" viewBox="0 0 11 11" width="11" height="11"><rect x="3.4" y="0.7" width="3.6" height="5.8" rx="1.8" fill="#ee5156"/><path d="M2.300 4.800v.5a2.900 2.900 0 0 0 5.800 0v-.5" fill="none" stroke="#ee5156" stroke-width="0.8"/><path d="M5.200 8.200v1.500" stroke="#ee5156" stroke-width="1.100"/><path d="M3.400 10h3.700" stroke="#ee5156" stroke-width="1"/><path d="M0.400 10.500L10.400 0.800" stroke="#ee5156" stroke-width="1.150"/></svg></div>
<div class="tile" style="left:524.3px;top:393.2px"></div>
<span class="t" style="left:564.4px;top:420.1px;font-size:10.8px;font-weight:700;color:#fff;letter-spacing:0.220px;transform-origin:0 50%;transform:scaleX(1.0036);">Irawaty</span><div class="lab" style="left:524.3px;top:446.6px;width:13.8px"></div><div style="position:absolute;left:526.3px;top:448.3px"><svg class="mic" viewBox="0 0 11 11" width="11" height="11"><rect x="3.4" y="0.7" width="3.6" height="5.8" rx="1.8" fill="#ee5156"/><path d="M2.300 4.800v.5a2.900 2.900 0 0 0 5.800 0v-.5" fill="none" stroke="#ee5156" stroke-width="0.8"/><path d="M5.200 8.200v1.500" stroke="#ee5156" stroke-width="1.100"/><path d="M3.400 10h3.700" stroke="#ee5156" stroke-width="1"/><path d="M0.400 10.500L10.400 0.800" stroke="#ee5156" stroke-width="1.150"/></svg></div>
<div class="tile" style="left:649.5px;top:393.2px"></div>
<span class="t" style="left:660.8px;top:420.1px;font-size:10.8px;font-weight:700;color:#fff;letter-spacing:0.100px;word-spacing:3.00px;">Sandy Febriyant...</span><div class="lab" style="left:649.5px;top:446.6px;width:13.8px"></div><div style="position:absolute;left:651.5px;top:448.3px"><svg class="mic" viewBox="0 0 11 11" width="11" height="11"><rect x="3.4" y="0.7" width="3.6" height="5.8" rx="1.8" fill="#ee5156"/><path d="M2.300 4.800v.5a2.900 2.900 0 0 0 5.800 0v-.5" fill="none" stroke="#ee5156" stroke-width="0.8"/><path d="M5.200 8.200v1.500" stroke="#ee5156" stroke-width="1.100"/><path d="M3.400 10h3.700" stroke="#ee5156" stroke-width="1"/><path d="M0.400 10.500L10.400 0.800" stroke="#ee5156" stroke-width="1.150"/></svg></div>
<div class="tile" style="left:774.7px;top:393.2px"><svg class="av" viewBox="0 0 60 60" width="60.5" height="60.5" style="overflow:hidden"><defs><filter id="blf" x="-5%" y="-5%" width="110%" height="110%"><feGaussianBlur stdDeviation="0.45"/></filter></defs><g filter="url(#blf)"><rect x="-2" y="-2" width="64" height="64" fill="#d7d5d2"/>
<rect x="13" y="-2" width="38.500" height="34" fill="#e7e5e1"/>
<rect x="13" y="-2" width="7" height="9" fill="#56675a"/><rect x="20" y="2" width="10" height="3" fill="#9aa09a"/>
<rect x="40" y="-2" width="11.500" height="7" fill="#a9b0a8"/><rect x="36" y="4" width="4" height="10" fill="#c9c9c4"/>
<rect x="42" y="9" width="9.500" height="22" fill="#b4877b"/>
<path d="M43 11h2v2h-2zM46.500 12h2v2h-2zM44 15.500h2v2h-2zM47.500 17h2v2h-2zM43 20h2v2h-2zM46 22.500h2v2h-2zM44 26h2v2h-2z" fill="#3e7fc0"/>
<path d="M45.500 9.500h2v2h-2zM48.500 14.500h2v2h-2zM42.500 17.500h2v2h-2zM46 19.500h2v2h-2zM48.500 25h2v2h-2zM43 28h2v2h-2z" fill="#e7c64a"/>
<path d="M13 32h38.500v30H13z" fill="#b7b9c3"/>
<path d="M14 36l3 2M18 44l3-2M15 52l3 2M44 40l3 2M46 50l3-2M42 56l3 1M22 55l2 2" stroke="#8e919e" stroke-width="1"/>
<path d="M16 22C14 8 20 .5 29.500 .5S44.500 9 43 22.500l4.500 12c2 8-2 16.500-8.500 20.500L22 50c-6-4-7-12-6-20z" fill="#171b28"/>
<path d="M40 30c4 4 6 10 5 16l-6 8c2-8 2-16 1-24z" fill="#2a3042"/>
<path d="M17.500 17c1-6.500 5-9.500 10.500-8.500 5 1 8.500 6 8.500 12S33.500 32 28 32c-6.500 0-11.500-7-10.500-15z" fill="#e3b8a3"/>
<path d="M18 15c2-5 6-7.500 10.500-6.500 4 1 7 4 8 9-3-4-6-6-9.500-6.500-3.500-.5-6.500 1-9 4z" fill="#171b28"/>
<ellipse cx="22.200" cy="17.500" rx="1.700" ry=".8" fill="#2a2020"/><ellipse cx="30.500" cy="18" rx="1.700" ry=".8" fill="#2a2020"/>
<path d="M23 26.500q3 1.800 6 0" stroke="#b6525a" stroke-width="1" fill="none"/>
<rect x="-2" y="-2" width="15" height="64" fill="#9a9092"/><rect x="-2" y="-2" width="15" height="10" fill="#b8a49c"/><rect x="-2" y="19" width="15" height="10" fill="#b04d45"/><path d="M-2 28c5-2 10-2 15 0v34H-2z" fill="#292f40"/>
<rect x="51.500" y="-2" width="11" height="64" fill="#8f8d9a"/><rect x="51.500" y="3" width="11" height="20" fill="#9c98a4"/><path d="M51.500 27c4-2 8-2 11 0v35h-11z" fill="#2a3044"/></g></svg></div>
<div class="lab" style="left:774.7px;top:446.6px;width:63.2px"></div><span class="t" style="left:791.1px;top:447.1px;font-size:9.6px;color:#fff;letter-spacing:-0.114px;">Syamsinar</span><div style="position:absolute;left:776.7px;top:448.3px"><svg class="mic" viewBox="0 0 11 11" width="11" height="11"><rect x="3.4" y="0.7" width="3.6" height="5.8" rx="1.8" fill="#ee5156"/><path d="M2.300 4.800v.5a2.900 2.900 0 0 0 5.800 0v-.5" fill="none" stroke="#ee5156" stroke-width="0.8"/><path d="M5.200 8.200v1.500" stroke="#ee5156" stroke-width="1.100"/><path d="M3.400 10h3.700" stroke="#ee5156" stroke-width="1"/><path d="M0.400 10.500L10.400 0.800" stroke="#ee5156" stroke-width="1.150"/></svg></div>
<div style="left:556.6px;top:465.9px;width:55.3px;height:25.4px;background:#0e0e0e;border-radius:3px"></div>
<svg style="left:578px;top:474.5px" width="13" height="8" viewBox="0 0 13 8"><path d="M1.1 1.4l5.400 5.200 5.400-5.200" fill="none" stroke="#a9a9c2" stroke-width="1.2"/></svg>
<svg style="left:24px;top:511px" width="22" height="22" viewBox="0 0 22 22"><rect x="7.700" y="2.400" width="6.200" height="11" rx="3.100" fill="#a9a9a9"/><path d="M5.600 9.500v1.200a5.200 5.200 0 0 0 10.400 0V9.500" fill="none" stroke="#a9a9a9" stroke-width="1.100"/><path d="M10.800 16v2.600M7.800 18.800h6" stroke="#a9a9a9" stroke-width="1.100"/><path d="M2.200 19.600L19.300 1.900" stroke="#e25555" stroke-width="1.300"/></svg>
<span class="t" style="left:18px;top:531.7px;font-size:9.5px;color:#c4c4c4;letter-spacing:-0.094px;-webkit-text-stroke:0.28px #c4c4c4;">Unmute</span><svg style="left:55.5px;top:519.5px" width="7" height="5" viewBox="0 0 7 5"><path d="M0.900 3.900l2.600-2.600 2.600 2.600" fill="none" stroke="#cdcdcd" stroke-width="1.250"/></svg>
<svg style="left:93px;top:511px" width="24" height="22" viewBox="0 0 24 22"><rect x="2.600" y="5.600" width="12.400" height="10.200" rx="2" fill="#a9a9a9"/><path d="M15.800 9.400l5.600-3.400v9.400l-5.600-3.400z" fill="#a9a9a9"/><path d="M3.300 19.100L21 1.900" stroke="#e25555" stroke-width="1.300"/></svg>
<span class="t" style="left:81.9px;top:531.7px;font-size:9.5px;color:#c4c4c4;letter-spacing:-0.184px;-webkit-text-stroke:0.28px #c4c4c4;">Start Video</span><svg style="left:129.300px;top:519.5px" width="7" height="5" viewBox="0 0 7 5"><path d="M0.900 3.900l2.600-2.600 2.600 2.600" fill="none" stroke="#cdcdcd" stroke-width="1.250"/></svg>
<svg style="left:411px;top:514px" width="20" height="15" viewBox="0 0 20 15"><circle cx="6.200" cy="4.300" r="3.400" fill="#a9a9a9"/><path d="M0.700 13.700v-1.400c0-2.400 2-3.700 5.500-3.700s5.500 1.300 5.500 3.700v1.400c0 .5-.3.800-.8.800H1.500c-.5 0-.8-.3-.8-.8z" fill="#a9a9a9"/><circle cx="14.100" cy="5.200" r="2.800" fill="#a9a9a9"/><path d="M12.600 14.500c.2-.3.300-.6.300-1v-1.400c0-1.300-.5-2.300-1.300-3 .7-.3 1.600-.4 2.500-.4 3 0 4.800 1.100 4.800 3.300v1.700c0 .5-.3.800-.8.800z" fill="#a9a9a9"/></svg>
<span class="t" style="left:433.4px;top:513px;font-size:9.4px;color:#d4d4d4;letter-spacing:-0.220px;transform-origin:0 50%;transform:scaleX(0.8502);-webkit-text-stroke:0.25px #d4d4d4;">77</span><span class="t" style="left:396.8px;top:531.7px;font-size:9.5px;color:#c4c4c4;letter-spacing:-0.162px;-webkit-text-stroke:0.28px #c4c4c4;">Participants</span><svg style="left:456.600px;top:519.5px" width="7" height="5" viewBox="0 0 7 5"><path d="M0.900 3.900l2.600-2.600 2.600 2.600" fill="none" stroke="#cdcdcd" stroke-width="1.250"/></svg>
<svg style="left:492.3px;top:516.4px" width="16" height="14" viewBox="0 0 16 14"><path d="M2.600.2h10.500a2.500 2.500 0 0 1 2.500 2.500v5.400a2.500 2.500 0 0 1-2.500 2.500H7.400L3.700 13.400c-.3.200-.5.100-.5-.2V10.600H2.600A2.500 2.500 0 0 1 .1 8.100V2.700A2.500 2.500 0 0 1 2.600.2z" fill="#a9a9a9"/></svg>
<span class="t" style="left:490.2px;top:531.7px;font-size:9.5px;color:#c4c4c4;letter-spacing:-0.145px;-webkit-text-stroke:0.28px #c4c4c4;">Chat</span><div style="left:558.1px;top:514.9px;width:18.1px;height:13.5px;background:#23d65b;border-radius:2.4px"></div>
<svg style="left:563.1px;top:517.6px" width="8" height="8" viewBox="0 0 8 8"><path d="M4 7.400V1.500M1.400 3.900L4 1.200l2.600 2.700" fill="none" stroke="#0c2b14" stroke-width="1.400"/></svg>
<span class="t" style="left:539.9px;top:531.7px;font-size:9.5px;color:#23d959;letter-spacing:-0.220px;transform-origin:0 50%;transform:scaleX(0.9521);-webkit-text-stroke:0.28px #23d959;">Share Screen</span><div style="left:626.5px;top:514.1px;width:15.4px;height:15.4px;border-radius:50%;border:1.200px solid #a9a9a9;box-sizing:border-box"></div><div style="left:628.9px;top:516.5px;width:10.6px;height:10.6px;border-radius:50%;background:#a9a9a9"></div>
<span class="t" style="left:618.9px;top:531.7px;font-size:9.5px;color:#c4c4c4;letter-spacing:-0.220px;transform-origin:0 50%;transform:scaleX(0.9828);-webkit-text-stroke:0.28px #c4c4c4;">Record</span><svg style="left:687px;top:512px" width="18" height="18" viewBox="0 0 18 18"><circle cx="7.400" cy="10" r="6.600" fill="#a9a9a9"/><circle cx="5.200" cy="8.400" r="0.900" fill="#1a1a1a"/><circle cx="9.600" cy="8.400" r="0.900" fill="#1a1a1a"/><path d="M4.200 11.200c1.600 2.400 4.800 2.400 6.400 0" fill="none" stroke="#1a1a1a" stroke-width="1"/><path d="M13.700 1v5M11.200 3.500h5" stroke="#a9a9a9" stroke-width="1.100"/></svg>
<span class="t" style="left:674px;top:531.7px;font-size:9.5px;color:#c4c4c4;letter-spacing:-0.220px;transform-origin:0 50%;transform:scaleX(0.9908);-webkit-text-stroke:0.28px #c4c4c4;">Reactions</span><div style="left:975.4px;top:518.9px;width:45.6px;height:19.9px;background:#c4262b;border-radius:4.500px"></div>
<span class="t" style="left:985px;top:521.7px;font-size:9.3px;font-weight:700;color:#fff;letter-spacing:-0.220px;transform-origin:0 50%;transform:scaleX(0.9654);">Leave</span><div style="left:0;top:548.6px;width:1030px;height:30.4px;background:linear-gradient(90deg,#1e3540 0,#1e3541 50%,#1f3546 62%,#1d2f48 78%,#1b2d4e 100%)"></div>
<svg style="left:11.900px;top:558px" width="12.2" height="11.6" viewBox="0 0 13 13" preserveAspectRatio="none"><path d="M0 1.800l5.400-.8v5.200H0zM6.200.900L13 0v6.200H6.200zM0 6.900h5.400v5.200L0 11.300zM6.200 6.900H13V13l-6.800-.9z" fill="#fff"/></svg>
<div style="left:36px;top:548.6px;width:259.5px;height:30.4px;background:#f3f3f3"></div>
<svg style="left:45px;top:558px" width="13" height="13" viewBox="0 0 13 13"><circle cx="8" cy="5" r="3.900" fill="none" stroke="#333" stroke-width="1.100"/><path d="M5.200 7.800L.8 12.200" stroke="#333" stroke-width="1.200"/></svg>
<span class="t" style="left:67px;top:557.2px;font-size:11.2px;color:#3c3c3c;letter-spacing:-0.184px;">Type here to search</span><svg style="left:306.4px;top:556.8px" width="14" height="14" viewBox="0 0 14 14"><circle cx="7" cy="7" r="4.900" fill="none" stroke="#f4f4f4" stroke-width="1.700"/></svg>
<svg style="left:343px;top:557px" width="14" height="13" viewBox="0 0 14 13"><rect x="1.700" y="3.400" width="6.400" height="6" fill="none" stroke="#eee" stroke-width="1"/><path d="M1 .9h8M1 12h8" stroke="#eee" stroke-width="1"/><path d="M11.600 1v2.400M11.600 5.600V12" stroke="#eee" stroke-width="1"/><rect x="10.900" y="3.700" width="1.600" height="1.600" fill="#fff"/></svg>
<svg style="left:379.5px;top:556.5px" width="17" height="14" viewBox="0 0 17 14"><path d="M.4 1.200h5.200l1.400 1.600h9.600v10.800H.4z" fill="#f7c64a"/><path d="M.4 1.200h5.200l1.400 1.600H.4z" fill="#e8a530"/><rect x=".4" y="4.200" width="16.200" height="9.400" fill="#fbd35c"/><path d="M4.400 13.600V8.200h8.200v5.400h-2.200v-3H6.600v3z" fill="#3a8ee6"/></svg>
<svg style="left:415.5px;top:554.6px" width="19" height="19" viewBox="0 0 19 19"><defs><linearGradient id="eg" x1="0" y1="0" x2="1" y2="0"><stop offset="0" stop-color="#2f8fe0"/><stop offset=".55" stop-color="#35c1c0"/><stop offset="1" stop-color="#6fd44a"/></linearGradient></defs><circle cx="9.500" cy="9.500" r="9" fill="#1766b8"/><path d="M.6 8.600C1.400 3.600 5.200.500 9.700.500c5 0 8.800 3.600 8.800 7.800 0 2.600-1.900 4.200-4.300 4.200-1.700 0-2.400-.8-2-1.600.6-1 .5-2.400-.6-3.400C9.200 5.400 4.800 5.600.6 8.600z" fill="url(#eg)"/><path d="M7.400 10.200c-.4 3.200 1.800 6.200 5.400 6.800-2.600 1.600-6.600.6-8.400-2.400-1-1.800-.6-4 .6-5.400 1.200-.8 2.300-.4 2.400 1z" fill="#0f4f9c"/></svg>
<svg style="left:452.5px;top:554.6px" width="19" height="19" viewBox="0 0 19 19"><path d="M6 5V3.200c0-1.200.9-2 2-2h3c1.100 0 2 .8 2 2V5" fill="none" stroke="#f2f2f2" stroke-width="1.300"/><path d="M1.600 4.800h15.800l1 11.800a1.600 1.600 0 0 1-1.600 1.600H2.200a1.600 1.600 0 0 1-1.600-1.600z" fill="#f4f4f4"/><rect x="5.600" y="8" width="3.400" height="3.400" fill="#f25022"/><rect x="9.800" y="8" width="3.400" height="3.400" fill="#7fba00"/><rect x="5.600" y="12.200" width="3.400" height="3.400" fill="#00a4ef"/><rect x="9.800" y="12.200" width="3.400" height="3.400" fill="#ffb900"/></svg>
<svg style="left:491px;top:555.2px" width="17" height="17" viewBox="0 0 17 17"><rect width="17" height="17" fill="#fcd912"/><rect width="17" height="6" fill="#ffe329"/><path d="M8.500 10.500H17V17H8.500z" fill="#e8a514"/><path d="M8.500 10.500H17L8.500 17z" fill="#3b3a39"/></svg>
<svg style="left:527px;top:555px" width="19" height="17" viewBox="0 0 19 17"><rect x="4.800" y=".2" width="13.800" height="16.200" rx="1" fill="#2b7cd3"/><rect x="4.800" y="4.200" width="13.800" height="4.100" fill="#2368c4"/><rect x="4.800" y="8.300" width="13.800" height="4.100" fill="#185abd"/><rect x="4.800" y="12.400" width="13.800" height="4" fill="#103f91"/><rect x="0" y="3.600" width="10.600" height="9.800" rx="1" fill="#185abd"/></svg>
<span class="t" style="left:528.6px;top:556.6px;font-size:7.6px;font-weight:700;color:#fff;letter-spacing:0.220px;transform-origin:0 50%;transform:scaleX(1.0282);">W</span><div style="left:555.3px;top:548.6px;width:35.8px;height:30.4px;background:#4b5b66"></div>
<svg style="left:564.6px;top:555.2px" width="17.200" height="17.200" viewBox="0 0 17 17"><rect width="17" height="17" rx="5" fill="#4a8cff"/><rect x="3.200" y="5.600" width="7.200" height="5.800" rx="1.400" fill="#fff"/><path d="M10.900 7.800l3-2v5.400l-3-2z" fill="#fff"/></svg>
<div style="left:373.2px;top:577px;width:30.3px;height:2px;background:#86c6f0"></div><div style="left:410.2px;top:577px;width:30.3px;height:2px;background:#86c6f0"></div><div style="left:447px;top:577px;width:30.3px;height:2px;background:#86c6f0"></div><div style="left:483.8px;top:577px;width:30px;height:2px;background:#86c6f0"></div><div style="left:521px;top:577px;width:26px;height:2px;background:#86c6f0"></div><div style="left:547.6px;top:577px;width:3.4px;height:2px;background:#5f92b8"></div><div style="left:555.3px;top:577px;width:35.8px;height:2px;background:#9ad2f5"></div>
<svg style="left:810px;top:561px" width="11" height="7" viewBox="0 0 11 7"><path d="M.8 5.800l4.600-4.600L10 5.800" fill="none" stroke="#f0f0f0" stroke-width="1.100"/></svg>
<svg style="left:827.5px;top:557.5px" width="11" height="13" viewBox="0 0 11 13"><rect x="3" y=".4" width="4.800" height="8.400" rx="2" fill="#f2f2f2"/><path d="M1.200 6v1.200a4.200 4.200 0 0 0 8.400 0V6" fill="none" stroke="#ddd" stroke-width="1"/><path d="M5.400 11v1.600" stroke="#ddd" stroke-width="1"/></svg>
<svg style="left:846.5px;top:557.5px" width="11" height="13" viewBox="0 0 11 13"><path d="M2 2.200C3.600.600 6.400.600 8 2.200M2 10.800c1.600 1.600 4.400 1.600 6 0" fill="none" stroke="#ddd" stroke-width=".9"/><rect x=".8" y="3.800" width="6.400" height="5.400" rx=".8" fill="none" stroke="#eee" stroke-width=".9"/><path d="M7.600 5.600l2.200-1v3.800l-2.200-1z" fill="none" stroke="#eee" stroke-width=".8"/></svg>
<svg style="left:862.5px;top:558.5px" width="14" height="11" viewBox="0 0 14 11"><rect x="3.600" y="3.600" width="9" height="5.800" fill="none" stroke="#eee" stroke-width=".9"/><rect x="12.800" y="5.400" width="1" height="2.200" fill="#eee"/><path d="M1.600.6v3M3 .6v3M.8 3.400h3v1.400c0 .8-.6 1.200-1.500 1.200S.8 5.600.8 4.800zM2.300 6v2.400h1.400" fill="none" stroke="#eee" stroke-width=".8"/></svg>
<svg style="left:883.5px;top:559px" width="11" height="11" viewBox="0 0 11 11"><path d="M.8 10C.8 5 5 .8 10 .8" fill="none" stroke="#999" stroke-width=".9"/><path d="M3.400 10c0-3.600 3-6.600 6.600-6.600" fill="none" stroke="#eee" stroke-width=".9"/><path d="M6 10c0-2.200 1.800-4 4-4" fill="none" stroke="#eee" stroke-width=".9"/><circle cx="9.200" cy="9.400" r="1.100" fill="#fff"/></svg>
<svg style="left:899px;top:558px" width="14" height="12" viewBox="0 0 14 12"><path d="M.8 4.200h2.200L6 1.400v9.200L3 7.800H.8z" fill="none" stroke="#eee" stroke-width=".9"/><path d="M7.800 4.200c.9 1 .9 2.600 0 3.600" fill="none" stroke="#eee" stroke-width=".8"/><path d="M9.600 2.800c1.600 1.800 1.600 4.600 0 6.400" fill="none" stroke="#bbb" stroke-width=".8"/><path d="M11.400 1.400c2.300 2.600 2.300 6.600 0 9.200" fill="none" stroke="#888" stroke-width=".8"/></svg>
<span class="t" style="left:919.3px;top:557.2px;font-size:9.4px;color:#fff;letter-spacing:-0.220px;transform-origin:0 50%;transform:scaleX(0.8694);">ENG</span><span class="t" style="left:950.2px;top:549.9px;font-size:9.2px;color:#fff;letter-spacing:-0.220px;transform-origin:0 50%;transform:scaleX(0.9517);">3:52 PM</span><span class="t" style="left:946.4px;top:563.9px;font-size:9.2px;color:#fff;letter-spacing:-0.220px;transform-origin:0 50%;transform:scaleX(0.9821);">3/31/2021</span><svg style="left:999px;top:557.6px" width="13" height="12" viewBox="0 0 13 12"><path d="M.4.400h12v8.800H4.600L1.800 11.600V9.200H.4z" fill="#f4f4f4"/><path d="M2.400 2.600h8M2.400 4.600h8M2.400 6.600h8" stroke="#8a93a6" stroke-width=".8"/></svg>
<div style="left:1005.3px;top:564.2px;width:11px;height:11px;border-radius:50%;background:#2b2d34;border:0.900px solid #5d6068;box-sizing:border-box"></div>
<span class="t" style="left:1008.5px;top:562.8px;font-size:8px;font-weight:700;color:#fff;letter-spacing:0.147px;">3</span><div style="left:1026px;top:548.6px;width:1px;height:30.4px;background:#6a7a8c"></div>
</body></html>
